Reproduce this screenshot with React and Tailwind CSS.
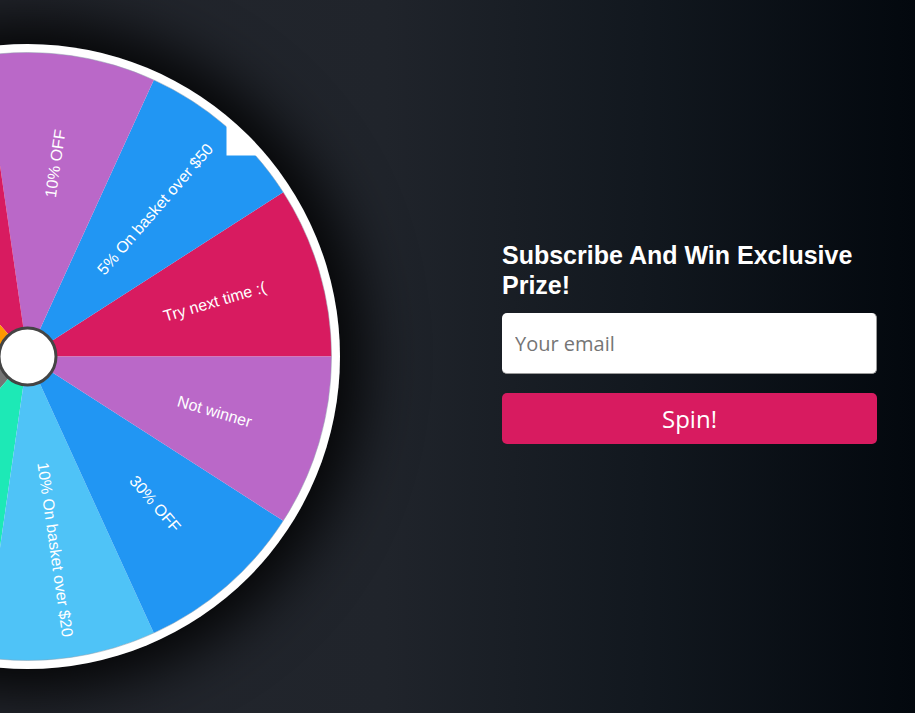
import { useState } from "react";

// labels left empty for the slices that sit off-screen
const segments = [
  { label: "Try next time :(", color: "#D81B60" },
  { label: "5% On basket over $50", color: "#2196F3" },
  { label: "10% OFF", color: "#BA68C8" },
  { label: "", color: "#D81B60" },
  { label: "", color: "#FF9800" },
  { label: "", color: "#FFC107" },
  { label: "", color: "#757575" },
  { label: "", color: "#1DE9B6" },
  { label: "10% On basket over $20", color: "#4FC3F7" },
  { label: "30% OFF", color: "#2196F3" },
  { label: "Not winner", color: "#BA68C8" },
];

const R = 304;
const step = 360 / segments.length;

const point = (deg, r) => {
  const a = (deg * Math.PI) / 180;
  return [r * Math.cos(a), -r * Math.sin(a)];
};

const Wheel = () => {
  return (
    <div className="w-[625px] h-[625px] shrink-0 -ml-[285px] rounded-full shadow-[0_0_60px_22px_rgba(0,0,0,0.9)]">
      <svg
        width="625"
        height="625"
        viewBox="-312.5 -312.5 625 625"
        className="block font-['Liberation_Sans',Arial,sans-serif]"
      >
        <circle cx="0" cy="0" r="312.5" fill="#ffffff" />
        {segments.map((seg, i) => {
          const [x1, y1] = point(i * step, R);
          const [x2, y2] = point((i + 1) * step, R);
          return (
            <path
              key={"s" + i}
              d={`M0 0 L${x1} ${y1} A${R} ${R} 0 0 0 ${x2} ${y2} Z`}
              fill={seg.color}
            />
          );
        })}
        <circle cx="0" cy="0" r={R} fill="none" stroke="#8fa0ad" strokeOpacity="0.5" strokeWidth="1" />
        {segments.map((seg, i) => {
          if (!seg.label) return null;
          const mid = i * step + step / 2;
          return (
            <text
              key={"t" + i}
              transform={`rotate(${-mid}) translate(195 0)`}
              textAnchor="middle"
              dominantBaseline="central"
              fill="#ffffff"
              fontSize="16"
            >
              {seg.label}
            </text>
          );
        })}
        <polygon points="199,-201 199,-237 235,-201" fill="#ffffff" />
        <circle cx="0" cy="0" r="28.5" fill="#ffffff" stroke="#444444" strokeWidth="3" />
      </svg>
    </div>
  );
};

const App = () => {
  const [email, setEmail] = useState("");

  return (
    <div className="w-full h-[713px] overflow-hidden flex items-center bg-[linear-gradient(90deg,#23262d_0%,#20242b_42%,#12181f_70%,#03080e_100%)]">
      <Wheel />

      <div className="ml-[162px] w-[375px] self-start mt-[240px] flex flex-col">
        <h2 className="text-white font-bold text-[25px] leading-[30px] font-['Liberation_Sans',Arial,sans-serif]">
          Subscribe And Win Exclusive Prize!
        </h2>
        <input
          type="text"
          placeholder="Your email"
          value={email}
          onChange={(e) => setEmail(e.target.value)}
          className="mt-[13px] h-[61px] w-full bg-white rounded-[5px] border-b border-r border-[#9a9a9a] px-[13px] text-[20px] text-gray-800 placeholder:text-[#757575] font-['Open_Sans',sans-serif] outline-none"
        />
        <button className="mt-[19px] h-[51px] w-full rounded-[5px] bg-[#D81B60] text-white text-[24px] font-['Open_Sans',sans-serif] cursor-pointer">
          Spin!
        </button>
      </div>
    </div>
  );
};

export default App;
